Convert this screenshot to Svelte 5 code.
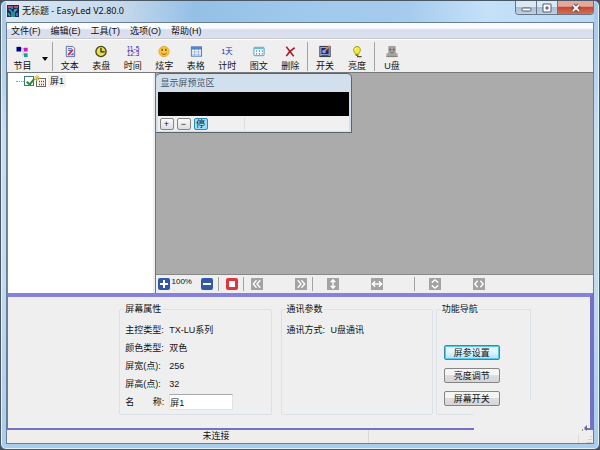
<script lang="ts">
	type Tool = { icon: string; label: string };

	const menus = ['文件(F)', '编辑(E)', '工具(T)', '选项(O)', '帮助(H)'];

	const editTools: Tool[] = [
		{ icon: 'text', label: '文本' },
		{ icon: 'clock', label: '表盘' },
		{ icon: 'time', label: '时间' },
		{ icon: 'smile', label: '炫字' },
		{ icon: 'table', label: '表格' },
		{ icon: 'days', label: '计时' },
		{ icon: 'image', label: '图文' },
		{ icon: 'delete', label: '删除' }
	];

	const screenTools: Tool[] = [
		{ icon: 'power', label: '开关' },
		{ icon: 'bulb', label: '亮度' }
	];

	const details = [
		['主控类型:', 'TX-LU系列'],
		['颜色类型:', '双色'],
		['屏宽(点):', '256'],
		['屏高(点):', '32']
	];

	const shapes = {
		left: 'M6 2.5 2.5 6.5 6 10.5M10 2.5 6.5 6.5 10 10.5',
		right: 'M3 2.5 6.5 6.5 3 10.5M7 2.5 10.5 6.5 7 10.5',
		vertical: 'M6.5 2V11M4 4.5 6.5 2 9 4.5M4 8.5 6.5 11 9 8.5',
		horizontal: 'M2 6.5H11M4.5 3.5 1.5 6.5 4.5 9.5M8.5 3.5 11.5 6.5 8.5 9.5',
		tall: 'M3 5 6.5 2 10 5M3 8 6.5 11 10 8',
		wide: 'M5 3 2 6.5 5 10M8 3 11 6.5 8 10'
	};

	let checked = $state(true);
	let screenName = $state('屏1');
	let zoom = $state(100);
</script>

{#snippet toolButton(tool: Tool)}
	<button class="tool">
		<svg class="icon" viewBox="0 0 16 14" aria-hidden="true">
			{#if tool.icon === 'program'}
				<path d="M6 4H11M8 4V11H11" fill="none" stroke="#999" stroke-dasharray="1 1" />
				<rect x="1" y="2" width="5" height="5" fill="#00008c" />
				<rect x="9" y="3" width="4" height="4" fill="#d21bc5" />
				<rect x="9" y="9" width="4" height="4" fill="#159da0" />
			{:else if tool.icon === 'text'}
				<path d="M4 1.500H11L13 3.500V12.500H4Z" fill="#e8eefc" stroke="#5c6ba8" />
				<path d="M6 4H10M6 6H11" stroke="#4557c4" />
				<path d="M6 11 11 5" stroke="#cc3340" stroke-width="2" />
				<path d="M8 11H12V8Z" fill="#7b64bb" />
			{:else if tool.icon === 'clock'}
				<circle cx="8" cy="7" r="5.500" fill="#e8df55" stroke="#4b4a16" stroke-width="1.500" />
				<path d="M8 3V7.500H12" fill="none" stroke="#222" stroke-width="1.300" />
			{:else if tool.icon === 'time'}
				<text x="8" y="6" class="digits">11-5</text>
				<text x="8" y="12" class="digits">12:3</text>
			{:else if tool.icon === 'smile'}
				<circle cx="8" cy="7" r="5.500" fill="#f8c935" stroke="#e8a32a" />
				<path d="M6 4V6.500M10 4V6.500" stroke="#604610" stroke-width="1.300" />
				<path d="M5 8.500Q8 12 11 8.500" fill="none" stroke="#a44d18" />
			{:else if tool.icon === 'table'}
				<rect x="3" y="2" width="11" height="10" fill="#fff" stroke="#4772ad" />
				<rect x="3" y="2" width="11" height="3" fill="#4f86d0" />
				<path d="M3 7.500H14M3 10H14M6.500 5V12M10.500 5V12" stroke="#8caedb" stroke-width=".8" />
			{:else if tool.icon === 'days'}
				<text x="8" y="10" class="days">1天</text>
			{:else if tool.icon === 'image'}
				<rect x="2.500" y="2.500" width="11" height="9" rx="1" fill="#f4fbff" stroke="#5295c4" />
				<path d="M3 3.500H13" stroke="#68b8dd" stroke-width="2" />
				<path d="M5 6.500H12" stroke="#278a66" stroke-width="1.500" stroke-dasharray="1 2" />
				<path d="M5 9.500H12" stroke="#4052bd" stroke-width="1.500" stroke-dasharray="1 2" />
			{:else if tool.icon === 'delete'}
				<path d="M4 2 12 12M13 3Q8 6 4 12" fill="none" stroke="#a51e29" stroke-width="1.700" />
			{:else if tool.icon === 'power'}
				<rect x="2.500" y="1.500" width="11" height="11" fill="#c9cbd2" stroke="#24263b" />
				<rect x="4" y="3" width="8" height="7" fill="#142984" />
				<circle cx="7" cy="7" r="2" fill="#7fa4f0" />
				<path d="M8 6 13 1" stroke="#e47c29" stroke-width="2" />
				<path d="M4 11.500H12" stroke="#333" />
			{:else if tool.icon === 'bulb'}
				<path d="M8 1.500A3.800 3.800 0 0 0 5.500 8L6.500 10H9.500L10.500 8A3.800 3.800 0 0 0 8 1.500Z" fill="#f3ed38" stroke="#9c961e" />
				<path d="M7 3.500 6 5" stroke="#fff" />
				<path d="M6.500 11H9.500M8 12.500H13" stroke="#55531c" stroke-width="1.300" />
			{:else}
				<path d="M4 1H12V9H14V13H2V9H4Z" fill="#a5a29d" />
				<path d="M6 4V6M10 4V6" stroke="#55524f" stroke-width="1.500" />
				<path d="M6 8H10" stroke="#77736f" />
				<path d="M2 12.500H14" stroke="#827e79" />
			{/if}
		</svg>
		<span>{tool.label}</span>
	</button>
{/snippet}

{#snippet mover(path: string, label: string)}
	<button class="mini grey" aria-label={label}>
		<svg viewBox="0 0 13 13"><path d={path} /></svg>
	</button>
{/snippet}

<div class="window">
	<header class="titlebar">
		<svg class="logo" viewBox="0 0 12 12" aria-hidden="true">
			<rect width="12" height="12" fill="#182b65" />
			<path d="M1 2H4M7 2H11" stroke="#bf4e53" stroke-width="2" />
			<path d="M2 4 5 7V12M10 4 7 7V12M1 8 3 11" fill="none" stroke="#2daf9b" stroke-width="1.500" />
			<path d="M5 1V4M8 4V6M10 8V11" stroke="#8cb6f0" />
		</svg>
		<h1>无标题 - EasyLed V2.80.0</h1>
		<div class="window-buttons">
			<button aria-label="最小化"><svg viewBox="0 0 12 10"><rect x="2" y="5" width="9" height="3" rx="1" fill="#fff" stroke="#555f6f" /></svg></button>
			<button aria-label="最大化"><svg viewBox="0 0 12 10"><path d="M2 1H10V9H2ZM5 4V6H7V4Z" fill="#fff" stroke="#555f6f" fill-rule="evenodd" /></svg></button>
			<button class="close" aria-label="关闭"><svg viewBox="0 0 12 10"><path d="M3 2 9 8M9 2 3 8" stroke="#6c4148" stroke-width="4" /><path d="M3 2 9 8M9 2 3 8" stroke="#fff" stroke-width="2" /></svg></button>
		</div>
	</header>

	<div class="client">
		<nav class="menubar">
			{#each menus as menu}
				<button>{menu}</button>
			{/each}
		</nav>

		<div class="toolbar">
			{@render toolButton({ icon: 'program', label: '节目' })}
			<button class="drop" aria-label="节目选项"><svg viewBox="0 0 6 4"><path d="M0 0H6L3 4Z" /></svg></button>
			<i class="rule"></i>
			<div class="tools edit">
				{#each editTools as tool}
					{@render toolButton(tool)}
				{/each}
			</div>
			<i class="rule"></i>
			<div class="tools">
				{#each screenTools as tool}
					{@render toolButton(tool)}
				{/each}
			</div>
			<i class="rule"></i>
			<div class="tools single">
				{@render toolButton({ icon: 'usb', label: 'U盘' })}
			</div>
		</div>

		<main class="workspace">
			<aside class="tree">
				<label>
					<i class="branch"></i>
					<input type="checkbox" bind:checked />
					<svg viewBox="0 0 13 12" aria-hidden="true">
						<rect x="2.500" y="3.500" width="9" height="8" fill="#f8f4e8" stroke="#6e6b64" />
						<path d="M5 6.500H11M5 9.500H11" stroke="#555" stroke-width="1.500" stroke-dasharray="1 1" />
						<path d="M3 0V6M0 3H6M1 1 5 5M5 1 1 5" stroke="#dfb82d" />
					</svg>
					<span>屏1</span>
				</label>
			</aside>
			<section class="stage">
				<div class="canvas">
					<div class="preview">
						<h2>显示屏预览区</h2>
						<div class="led"></div>
						<div class="preview-bar">
							<button aria-label="放大预览">+</button>
							<button aria-label="缩小预览">−</button>
							<button class="stop">停</button>
							<i></i>
						</div>
					</div>
				</div>
				<div class="zoombar">
					<button class="mini blue" aria-label="放大" onclick={() => (zoom += 10)}><svg viewBox="0 0 12 12"><path d="M6 2V10M2 6H10" /></svg></button>
					<output>{zoom}%</output>
					<button class="mini blue" aria-label="缩小" onclick={() => (zoom -= 10)}><svg viewBox="0 0 12 12"><path d="M2 6H10" /></svg></button>
					<i class="rule"></i>
					<button class="mini red" aria-label="停止"><svg viewBox="0 0 12 12"><rect x="3" y="3" width="6" height="6" fill="#fff" /></svg></button>
					<i class="rule"></i>
					<div class="pair">
						{@render mover(shapes.left, '左移')}
						{@render mover(shapes.right, '右移')}
					</div>
					<i class="rule"></i>
					<div class="pair open">
						{@render mover(shapes.vertical, '垂直')}
						{@render mover(shapes.horizontal, '水平')}
					</div>
					<i class="rule"></i>
					<div class="pair">
						{@render mover(shapes.tall, '高度')}
						{@render mover(shapes.wide, '宽度')}
					</div>
				</div>
			</section>
		</main>

		<section class="settings">
			<fieldset class="screen">
				<legend>屏幕属性</legend>
				{#each details as [label, value]}
					<p class="field"><span>{label}</span><span>{value}</span></p>
				{/each}
				<p class="field name">
					<label for="screen-name"><span>名</span><span>称:</span></label>
					<input id="screen-name" type="text" bind:value={screenName} />
				</p>
			</fieldset>
			<fieldset class="comm">
				<legend>通讯参数</legend>
				<p class="field"><span>通讯方式:</span><span>U盘通讯</span></p>
			</fieldset>
			<fieldset class="guide">
				<legend>功能导航</legend>
				<button class="active">屏参设置</button>
				<button>亮度调节</button>
				<button>屏幕开关</button>
			</fieldset>
		</section>

		<footer class="statusbar">
			<span>未连接</span>
			<span></span>
			<svg class="grip" viewBox="0 0 9 9" aria-hidden="true"><path d="M7 2V3M5 5V6M7 5V6M3 8V9M5 8V9M7 8V9" stroke="#b8b1ad" /></svg>
		</footer>
		<div class="patch">
			<svg viewBox="0 0 6 6" aria-hidden="true"><path d="M5 0V6L2 3Z" fill="#66669c" /><path d="M0 5H1" stroke="#444" /></svg>
		</div>
	</div>
</div>

<style>
	:global(body) {
		margin: 0;
		background: #46535f;
	}

	* {
		box-sizing: border-box;
	}

	.window {
		min-height: 100vh;
		display: flex;
		flex-direction: column;
		padding: 0 5px 5px;
		border: 1px solid #4a5866;
		border-radius: 6px;
		background: linear-gradient(180deg, #a4c8e8, #c7dff3 30%, #c5dcf0 60%, #a9cdec);
		box-shadow: inset 0 0 0 1px #e3f2ff;
		font-family: 'Liberation Sans', 'Noto Sans CJK SC', sans-serif;
		font-size: 9px;
		line-height: 12px;
		color: #111;
	}

	button,
	input {
		margin: 0;
		padding: 0;
		font: inherit;
		color: inherit;
	}

	button {
		border: 0;
		background: none;
	}

	svg {
		display: block;
	}

	h1,
	h2,
	p {
		margin: 0;
		font-size: inherit;
		font-weight: normal;
	}

	.titlebar {
		display: flex;
		align-items: flex-start;
		height: 21px;
		background: linear-gradient(90deg, #dce8f3, #c4d8eb 20%, #94c0e6 32%, #9fc9ec 50%, #a5cbed 68%, #c5e1fa 82%, #b9d7f1);
	}

	.logo {
		width: 12px;
		height: 12px;
		margin: 4px 3px 0 1px;
	}

	h1 {
		flex: 1;
		margin-top: 4px;
		font-family: 'Noto Sans', 'Noto Sans CJK SC', sans-serif;
	}

	.window-buttons {
		display: flex;
		height: 14px;
		border: 1px solid #66778b;
		border-top: 0;
		border-radius: 0 0 4px 4px;
		overflow: hidden;
	}

	.window-buttons button {
		width: 21px;
		display: grid;
		place-items: center;
		border-right: 1px solid #66778b;
		background: linear-gradient(#dce9f5 45%, #a9bfd5 50%, #bfd3e7);
	}

	.window-buttons .close {
		width: 35px;
		border: 0;
		background: linear-gradient(#e3a79b 40%, #c34a35 50%, #d66d50);
	}

	.window-buttons svg {
		width: 12px;
		height: 10px;
	}

	.client {
		position: relative;
		flex: 1;
		display: flex;
		flex-direction: column;
		border: 1px solid #687e94;
		background: #efefef;
	}

	.menubar {
		display: flex;
		gap: 10px;
		height: 16px;
		padding-left: 4px;
		background: linear-gradient(#fafbfe 35%, #d9deee 45%, #dce1f1);
		border-bottom: 1px solid #c8c8cd;
	}

	.menubar button {
		height: 15px;
	}

	.toolbar {
		display: flex;
		height: 33px;
		border-top: 1px solid #fff;
	}

	.tool {
		width: 31px;
		display: flex;
		flex-direction: column;
		align-items: center;
		padding-top: 5px;
		white-space: nowrap;
	}

	.tool .icon {
		width: 16px;
		height: 14px;
		margin-bottom: 2px;
	}

	.digits,
	.days {
		font-size: 7px;
		text-anchor: middle;
		fill: #2424bb;
	}

	.days {
		font-size: 8px;
	}

	.drop {
		width: 14px;
		padding: 6px 4px 0;
	}

	.drop svg {
		width: 6px;
		height: 4px;
	}

	.tools {
		display: flex;
		width: 66px;
		padding: 0 1px;
	}

	.tools.edit {
		width: 254px;
	}

	.tools.single {
		width: 34px;
	}

	.tools .tool {
		flex: 1;
	}

	.rule {
		width: 1px;
		height: 29px;
		margin-top: 2px;
		background: #a3a3a3;
	}

	.workspace {
		flex: 1;
		display: flex;
		border-top: 1px solid #777;
	}

	.tree {
		width: 25%;
		background: #fff;
		border-left: 1px solid #858585;
		border-right: 1px solid #efefef;
	}

	.tree label {
		display: flex;
		align-items: center;
		padding: 2px 0 0 8px;
	}

	.branch {
		width: 8px;
		border-top: 1px dotted #999;
	}

	.tree input {
		appearance: none;
		width: 10px;
		height: 10px;
		border: 1px solid #397d79;
		background: #fff;
	}

	.tree input:checked::before {
		content: '';
		display: block;
		width: 3px;
		height: 6px;
		margin-left: 3px;
		border: solid #2d8c37;
		border-width: 0 2px 2px 0;
		transform: rotate(40deg);
	}

	.tree svg {
		width: 13px;
		height: 12px;
		margin-right: 1px;
	}

	.tree span {
		padding: 0 2px;
		background: #f0f0f0;
	}

	.stage {
		flex: 1;
		display: flex;
		flex-direction: column;
		margin-left: 1px;
		border-left: 1px solid #747474;
	}

	.canvas {
		flex: 1;
		background: #ababab;
		border-bottom: 1px solid #888;
	}

	.preview {
		width: 196px;
		padding: 0 2px;
		border: 1px solid #5b656f;
		border-left: 0;
		border-radius: 5px 5px 0 0;
		background: #d2e0ed;
	}

	h2 {
		height: 18px;
		padding-left: 3px;
		line-height: 18px;
		color: #46535e;
	}

	.led {
		height: 24px;
		background: #000;
	}

	.preview-bar {
		display: flex;
		align-items: center;
		gap: 3px;
		height: 15px;
		margin-bottom: 1px;
		padding-left: 2px;
		background: #f0f0f0;
	}

	.preview-bar button {
		width: 14px;
		height: 12px;
		border: 1px solid #858585;
		border-radius: 2px;
		background: linear-gradient(#fafafa, #dedede);
		line-height: 10px;
	}

	.preview-bar .stop {
		border-color: #248bbd;
		background: #9cdcf8;
	}

	.preview-bar i {
		height: 12px;
		margin-left: 33px;
		border-left: 1px solid #ddd;
	}

	.zoombar {
		display: flex;
		align-items: center;
		height: 18px;
		padding-left: 2px;
	}

	.zoombar output {
		width: 31px;
		padding-left: 2px;
		margin-top: -4px;
		font-size: 8px;
	}

	.zoombar .rule {
		height: 14px;
		margin: 0 7px 0 5px;
	}

	.mini {
		width: 12px;
		height: 12px;
	}

	.mini path {
		fill: none;
		stroke: #fff;
		stroke-width: 1.5;
	}

	.blue {
		border-radius: 2px;
		background: #3157a8;
	}

	.blue path {
		stroke-width: 2;
	}

	.red {
		border-radius: 2px;
		background: #dc373b;
	}

	.grey {
		background: #a3a3a3;
	}

	.pair {
		display: flex;
		gap: 32px;
	}

	.pair:last-child,
	.pair.open {
		padding-left: 7px;
	}

	.pair.open {
		padding-right: 26px;
	}

	.settings {
		display: grid;
		grid-template-columns: 153fr 153fr 90fr;
		column-gap: 9px;
		height: 137px;
		padding: 6px 10% 14px 19%;
		border: 1px solid #7472c7;
		border-width: 4px 3px 2px 1px;
		border-top-color: #8581dc;
	}

	fieldset {
		min-width: 0;
		margin: 0;
		padding: 0 0 0 4px;
		border: 1px solid #dae2e8;
		border-radius: 2px;
	}

	legend {
		margin-bottom: 6px;
		padding: 0 1px;
	}

	.field {
		display: flex;
		align-items: center;
		height: 18px;
		padding-left: 1px;
	}

	.field > :first-child {
		display: flex;
		justify-content: space-between;
		width: 44px;
		padding-right: 5px;
		white-space: nowrap;
	}

	.field input {
		width: 64px;
		height: 16px;
		border: 1px solid #e2e2e2;
		border-top-color: #aaa;
		background: #fff;
	}

	.guide {
		margin-left: -6px;
	}

	.guide legend {
		margin-bottom: 30px;
	}

	.guide button {
		position: relative;
		z-index: 1;
		display: block;
		width: 56px;
		height: 15px;
		margin: 0 0 8px 3px;
		border: 1px solid #858585;
		border-radius: 2px;
		background: linear-gradient(#f5f5f5 45%, #dedede 50%, #d5d5d5);
	}

	.guide .active {
		border-color: #318ab5;
		background: linear-gradient(#e4f6fe 45%, #a9e1f8);
		box-shadow: inset 0 0 0 1px #55c9ee;
	}

	.statusbar {
		display: grid;
		grid-template-columns: 362fr 210fr 14px;
		height: 13px;
		background: #f0eeed;
	}

	.statusbar span {
		padding-left: 54%;
		border-right: 1px solid #ddd7d5;
		white-space: nowrap;
	}

	.grip {
		width: 9px;
		height: 9px;
		align-self: end;
		justify-self: end;
	}

	/* rounded plate that lies over the panel edge and the status bar */
	.patch {
		position: absolute;
		right: 5px;
		bottom: 6px;
		width: 114px;
		height: 37px;
		border-radius: 4px 10px 18px 4px;
		background: #efefef;
	}

	.patch svg {
		position: absolute;
		right: 0;
		bottom: 6px;
		width: 6px;
		height: 6px;
	}
</style>
